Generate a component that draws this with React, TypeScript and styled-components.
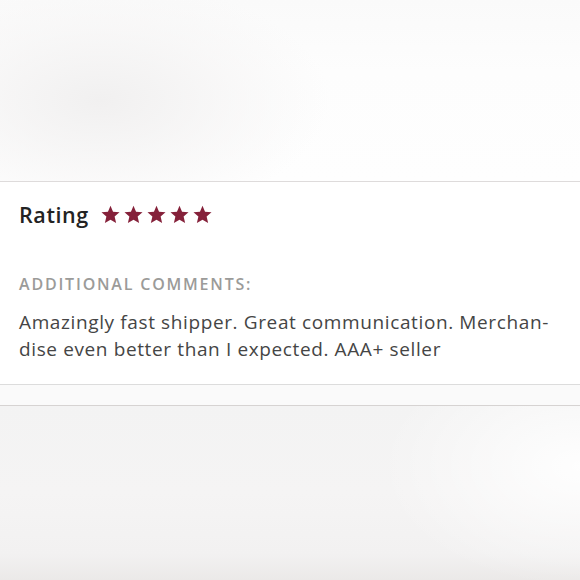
import React from "react";
import styled, { createGlobalStyle } from "styled-components";

const Global = createGlobalStyle`
  html, body { margin: 0; padding: 0; }
  body { width: 580px; height: 580px; overflow: hidden; background: #fff; font-family: "Open Sans", Lato, sans-serif; }
`;

const Page = styled.div`
  width: 580px;
  height: 580px;
  display: flex;
  flex-direction: column;
`;

const TopBackdrop = styled.div`
  height: 181px;
  background:
    radial-gradient(ellipse 230px 120px at 100px 100px, #f1f0f0 0%, rgba(246,245,245,0.6) 60%, rgba(255,255,255,0) 100%),
    linear-gradient(180deg, #fafafa 0%, #fdfdfd 40%, #fefefe 100%);
`;

const Card = styled.section`
  border-top: 1px solid #dedbdb;
  border-bottom: 1px solid #dcdcdc;
  background: #fff;
  height: 202px;
  box-sizing: content-box;
  padding: 0 19px;
  display: flex;
  flex-direction: column;
`;

const RatingRow = styled.div`
  display: flex;
  align-items: center;
  gap: 12px;
  margin-top: 17px;
  height: 30px;
`;

const RatingLabel = styled.span`
  font-size: 21.5px;
  font-weight: 600;
  color: #232323;
  letter-spacing: 0.6px;
`;

const Stars = styled.div`
  display: flex;
  gap: 4px;
  margin-top: 1px;
`;

const SectionTitle = styled.div`
  margin-top: 45px;
  font-size: 16px;
  font-weight: 600;
  color: #9b9b99;
  letter-spacing: 1.8px;
  line-height: 20px;
`;

const Comment = styled.p`
  margin: 15px 0 0;
  font-size: 19px;
  line-height: 27px;
  color: #454545;
  letter-spacing: 0.62px;
  white-space: nowrap;
`;

const Strip = styled.div`
  height: 20px;
  background: #fafafa;
  border-bottom: 1px solid #d6d3d2;
`;

const BottomBackdrop = styled.div`
  flex: 1;
  background:
    radial-gradient(ellipse 200px 120px at 580px 60px, rgba(255,255,255,0.9) 0%, rgba(255,255,255,0) 100%),
    linear-gradient(180deg, #f3f3f3 0%, #f5f4f4 50%, #f2f1f1 85%, #ebe9e8 100%);
`;

const Star = () => (
  <svg width="19" height="19" viewBox="0 0 24 24">
    <polygon
      points="12,0.8 15.2,8.4 23.4,9.1 17.2,14.6 19.1,22.8 12,18.5 4.9,22.8 6.8,14.6 0.6,9.1 8.8,8.4"
      fill="#85213a"
    />
  </svg>
);

export default function App() {
  return (
    <Page>
      <Global />
      <TopBackdrop />
      <Card>
        <RatingRow>
          <RatingLabel>Rating</RatingLabel>
          <Stars>
            {[0, 1, 2, 3, 4].map((i) => (
              <Star key={i} />
            ))}
          </Stars>
        </RatingRow>
        <SectionTitle>ADDITIONAL COMMENTS:</SectionTitle>
        <Comment>
          Amazingly fast shipper. Great communication. Merchan-
          <br />
          dise even better than I expected. AAA+ seller
        </Comment>
      </Card>
      <Strip />
      <BottomBackdrop />
    </Page>
  );
}
